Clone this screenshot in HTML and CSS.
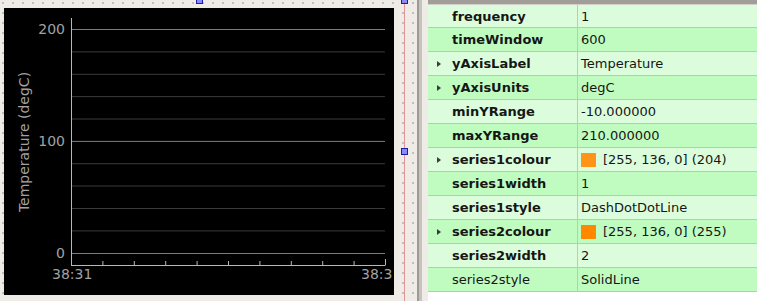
FILE: index.html
```html
<!DOCTYPE html>
<html lang="en">
<head>
  <meta charset="UTF-8" />
  <title>Plot widget properties</title>
  <link rel="stylesheet" href="styles.css">
</head>
<body>
  <div class="designer">
    <div class="canvas">
      <div class="plot">
        <svg width="390" height="287" viewBox="0 0 390 287">
          <g class="grid-minor">
            <line x1="68" y1="43.9" x2="381" y2="43.9" />
            <line x1="68" y1="66.3" x2="381" y2="66.3" />
            <line x1="68" y1="88.6" x2="381" y2="88.6" />
            <line x1="68" y1="111" x2="381" y2="111" />
            <line x1="68" y1="155.7" x2="381" y2="155.7" />
            <line x1="68" y1="178" x2="381" y2="178" />
            <line x1="68" y1="200.5" x2="381" y2="200.5" />
            <line x1="68" y1="222.9" x2="381" y2="222.9" />
          </g>
          <g class="grid-major">
            <line x1="68" y1="21.5" x2="381" y2="21.5" />
            <line x1="68" y1="133.4" x2="381" y2="133.4" />
            <line x1="68" y1="245.5" x2="381" y2="245.5" />
          </g>
          <g class="axis">
            <line x1="67.5" y1="10" x2="67.5" y2="257.5" />
            <line x1="67" y1="257.5" x2="381.5" y2="257.5" />
            <line x1="98.9" y1="253" x2="98.9" y2="257" />
            <line x1="130.3" y1="253" x2="130.3" y2="257" />
            <line x1="161.7" y1="253" x2="161.7" y2="257" />
            <line x1="193.1" y1="253" x2="193.1" y2="257" />
            <line x1="224.5" y1="253" x2="224.5" y2="257" />
            <line x1="255.9" y1="253" x2="255.9" y2="257" />
            <line x1="287.3" y1="253" x2="287.3" y2="257" />
            <line x1="318.7" y1="253" x2="318.7" y2="257" />
            <line x1="350.1" y1="253" x2="350.1" y2="257" />
            <line x1="381.5" y1="251" x2="381.5" y2="257" />
          </g>
          <g class="labels">
            <text x="61" y="26" text-anchor="end">200</text>
            <text x="61" y="138" text-anchor="end">100</text>
            <text x="61" y="250" text-anchor="end">0</text>
            <text x="48" y="271">38:31</text>
            <text x="357" y="271">38:3</text>
            <text x="20" y="134" text-anchor="middle" dominant-baseline="central" transform="rotate(-90 20 134)">Temperature (degC)</text>
          </g>
        </svg>
      </div>
      <div class="guide"></div>
      <span class="handle handle-top"></span>
      <span class="handle handle-corner"></span>
      <span class="handle handle-side"></span>
    </div>

    <div class="splitter"></div>

    <div class="props">
      <div class="props-head"></div>
      <div class="row"><span class="name"><i class="arrow"></i>frequency</span><span class="value">1</span></div>
      <div class="row"><span class="name"><i class="arrow"></i>timeWindow</span><span class="value">600</span></div>
      <div class="row"><span class="name"><i class="arrow open"></i>yAxisLabel</span><span class="value">Temperature</span></div>
      <div class="row"><span class="name"><i class="arrow open"></i>yAxisUnits</span><span class="value">degC</span></div>
      <div class="row"><span class="name"><i class="arrow"></i>minYRange</span><span class="value">-10.000000</span></div>
      <div class="row"><span class="name"><i class="arrow"></i>maxYRange</span><span class="value">210.000000</span></div>
      <div class="row"><span class="name"><i class="arrow open"></i>series1colour</span><span class="value"><i class="swatch faded"></i>[255, 136, 0] (204)</span></div>
      <div class="row"><span class="name"><i class="arrow"></i>series1width</span><span class="value">1</span></div>
      <div class="row"><span class="name"><i class="arrow"></i>series1style</span><span class="value">DashDotDotLine</span></div>
      <div class="row"><span class="name"><i class="arrow open"></i>series2colour</span><span class="value"><i class="swatch"></i>[255, 136, 0] (255)</span></div>
      <div class="row"><span class="name"><i class="arrow"></i>series2width</span><span class="value">2</span></div>
      <div class="row"><span class="name plain"><i class="arrow"></i>series2style</span><span class="value">SolidLine</span></div>
    </div>
  </div>
</body>
</html>
```

FILE: styles.css
```css
* {
  box-sizing: border-box;
  margin: 0;
  padding: 0;
}
body {
  width: 757px;
  height: 301px;
  overflow: hidden;
  font-family: "DejaVu Sans", "Liberation Sans", sans-serif;
  font-size: 13px;
  color: #161616;
  background: #efebe7;
}
.designer {
  display: flex;
  height: 301px;
}
.canvas {
  position: relative;
  width: 416px;
  flex: none;
  padding: 8px 0 0 4px;
  background-color: #efebe7;
  background-image: radial-gradient(circle, #b4b0ab 0.6px, transparent 1px);
  background-size: 10px 10px;
  background-position: -2px -2px;
}
.plot {
  width: 390px;
  height: 287px;
  background: #000;
  overflow: hidden;
}
.plot svg {
  display: block;
}
.grid-minor line {
  stroke: #3a3a3a;
  stroke-width: 1;
}
.grid-major line {
  stroke: #7c7c7c;
  stroke-width: 1;
}
.axis line {
  stroke: #b8b8b8;
  stroke-width: 1;
}
.labels text {
  fill: #a2a2a2;
  font-family: "DejaVu Sans", sans-serif;
  font-size: 14px;
}
.guide {
  position: absolute;
  left: 404px;
  top: 0;
  bottom: 0;
  width: 1px;
  background: #e39494;
}
.handle {
  position: absolute;
  width: 7px;
  height: 7px;
  background: #8a8af2;
  border: 1px solid #1c1cae;
}
.handle-top {
  left: 196px;
  top: -3px;
}
.handle-corner {
  left: 401px;
  top: -3px;
}
.handle-side {
  left: 401px;
  top: 148px;
}
.splitter {
  width: 12px;
  flex: none;
  background: linear-gradient(to right, #efebe7 0 1px, #9e9a96 1px 3px, #c6c2be 3px 6px, #efebe7 6px);
}
.props {
  flex: 1;
  background: #fff;
}
.props-head {
  height: 5px;
  background: #a19d99;
  border-bottom: 1px solid #d2cec9;
}
.row {
  display: flex;
  height: 24px;
  border-bottom: 1px solid #b3cdb3;
  background: #dcfddc;
}
.row:nth-of-type(odd) {
  background: #c0fcc0;
}
.props-head + .row {
  height: 23px;
}
.name {
  display: flex;
  align-items: center;
  width: 150px;
  flex: none;
  padding-left: 9px;
  font-weight: bold;
  border-right: 1px solid #c9c3bb;
}
.name.plain {
  font-weight: normal;
}
.arrow {
  width: 15px;
  height: 7px;
  flex: none;
}
.arrow.open {
  width: 0;
  height: 0;
  margin-right: 11px;
  border-left: 4px solid #3c3c3c;
  border-top: 3.5px solid transparent;
  border-bottom: 3.5px solid transparent;
}
.value {
  display: flex;
  align-items: center;
  padding-left: 3px;
}
.swatch {
  width: 15px;
  height: 14px;
  margin-right: 7px;
  background: #ff8800;
}
.swatch.faded {
  background: #ff9419;
}
```
